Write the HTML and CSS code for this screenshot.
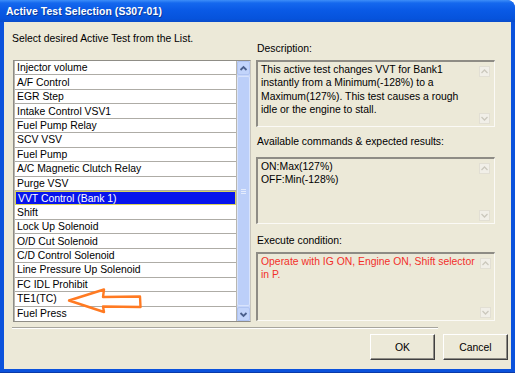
FILE: index.html
```html
<!DOCTYPE html>
<html lang="en">
<head>
    <meta charset="UTF-8">
    <title>Active Test Selection (S307-01)</title>
    <link rel="stylesheet" href="styles.css">
</head>
<body>
    <div class="window">
        <div class="titlebar">Active Test Selection (S307-01)</div>
        <div class="client">
            <div class="content">
                <div class="left">
                    <p class="prompt">Select desired Active Test from the List.</p>
                    <div class="listbox">
                        <ul class="items">
                            <li>Injector volume</li>
                            <li>A/F Control</li>
                            <li>EGR Step</li>
                            <li>Intake Control VSV1</li>
                            <li>Fuel Pump Relay</li>
                            <li>SCV VSV</li>
                            <li>Fuel Pump</li>
                            <li>A/C Magnetic Clutch Relay</li>
                            <li>Purge VSV</li>
                            <li class="selected">VVT Control (Bank 1)</li>
                            <li>Shift</li>
                            <li>Lock Up Solenoid</li>
                            <li>O/D Cut Solenoid</li>
                            <li>C/D Control Solenoid</li>
                            <li>Line Pressure Up Solenoid</li>
                            <li>FC IDL Prohibit</li>
                            <li>TE1(TC)</li>
                            <li>Fuel Press</li>
                        </ul>
                        <div class="scrollbar">
                            <div class="sb-btn"><svg width="11" height="11" viewBox="0 0 11 11"><polyline points="2.5,7 5.5,4 8.5,7" /></svg></div>
                            <div class="sb-thumb"><span></span><span></span><span></span></div>
                            <div class="sb-btn"><svg width="11" height="11" viewBox="0 0 11 11"><polyline points="2.5,4 5.5,7 8.5,4" /></svg></div>
                        </div>
                        <!-- pointer drawn over the list -->
                        <svg class="pointer" width="76" height="28" viewBox="0 0 76 28">
                            <polygon points="2,13.5 37,2.5 36,10 73,9.5 73.5,20 36,19.5 37,25" />
                        </svg>
                    </div>
                </div>
                <div class="right">
                    <div class="label">Description:</div>
                    <div class="field field-desc">
                        <div class="field-text">This active test changes VVT for Bank1<br>instantly from a Minimum(-128%) to a<br>Maximum(127%). This test causes a rough<br>idle or the engine to stall.</div>
                        <div class="field-scroll">
                            <div class="fs-btn"><svg width="9" height="9" viewBox="0 0 9 9"><polyline points="1.5,6 4.5,3 7.5,6" /></svg></div>
                            <div class="fs-btn"><svg width="9" height="9" viewBox="0 0 9 9"><polyline points="1.5,3 4.5,6 7.5,3" /></svg></div>
                        </div>
                    </div>
                    <div class="label label-gap">Available commands &amp; expected results:</div>
                    <div class="field field-cmd">
                        <div class="field-text">ON:Max(127%)<br>OFF:Min(-128%)</div>
                        <div class="field-scroll">
                            <div class="fs-btn"><svg width="9" height="9" viewBox="0 0 9 9"><polyline points="1.5,6 4.5,3 7.5,6" /></svg></div>
                            <div class="fs-btn"><svg width="9" height="9" viewBox="0 0 9 9"><polyline points="1.5,3 4.5,6 7.5,3" /></svg></div>
                        </div>
                    </div>
                    <div class="label label-gap2">Execute condition:</div>
                    <div class="field field-cond">
                        <div class="field-text warn">Operate with IG ON, Engine ON, Shift selector<br>in P.</div>
                        <div class="field-scroll">
                            <div class="fs-btn"><svg width="9" height="9" viewBox="0 0 9 9"><polyline points="1.5,6 4.5,3 7.5,6" /></svg></div>
                            <div class="fs-btn"><svg width="9" height="9" viewBox="0 0 9 9"><polyline points="1.5,3 4.5,6 7.5,3" /></svg></div>
                        </div>
                    </div>
                </div>
            </div>
            <div class="separator"></div>
            <div class="buttons">
                <button class="btn">OK</button>
                <button class="btn">Cancel</button>
            </div>
        </div>
    </div>
</body>
</html>
```

FILE: styles.css
```css
*{
    margin:0;
    padding:0;
    box-sizing:border-box;
}
body{
    background:#fff;
    font-family:"Liberation Sans", Arial, sans-serif;
    font-size:10.4px;
    color:#000;
}
.window{
    width:515px;
    height:373px;
    display:flex;
    flex-direction:column;
    background:#0b52dc;
    border-top-right-radius:8px;
    border-bottom:1px solid #0a3aa8;
}
.titlebar{
    height:22px;
    padding-left:6px;
    display:flex;
    align-items:center;
    color:#fff;
    font-weight:bold;
    font-size:10.4px;
    letter-spacing:0.1px;
    text-shadow:1px 1px 0 #0a3b9c;
    background:linear-gradient(to bottom, #3d8ef8 0, #1568ee 3px, #0a5ae6 45%, #0653dc 85%, #0a4cca 100%);
    border-top-right-radius:8px;
}
.client{
    flex:1;
    margin:0 4px 3px 4px;
    background:#ece9d8;
    display:flex;
    flex-direction:column;
    padding-left:8px;
}
.content{
    display:flex;
    gap:5px;
}
.left{
    width:239px;
}
.prompt{
    padding-top:10px;
    line-height:13px;
}
.listbox{
    position:relative;
    margin:15px 0 0 1px;
    height:262px;
    border:1px solid #8f8d86;
    border-right-color:#c8c5bb;
    display:flex;
    background:#fff;
}
.items{
    list-style:none;
    flex:1;
    display:grid;
    grid-template-rows:repeat(18, 1fr);
    border-left:1px solid #b9b7b0;
    border-right:1px solid #b9b7b0;
}
.items li{
    padding-left:2px;
    border-bottom:1px solid #aeaca6;
    display:flex;
    align-items:center;
    white-space:nowrap;
}
.items li:last-child{
    border-bottom:none;
}
.items li.selected{
    background:#0714ec;
    color:#fff;
    border:1px solid #d8d260;
}
.scrollbar{
    width:13px;
    display:flex;
    flex-direction:column;
    background:#c6d6fa;
}
.sb-btn{
    height:14px;
    display:flex;
    align-items:center;
    justify-content:center;
    background:#c2d4fb;
    border:1px solid #b0c4f2;
    border-radius:2px;
}
.sb-btn polyline{
    fill:none;
    stroke:#4a5f8c;
    stroke-width:1.8;
}
.sb-thumb{
    flex:1;
    margin:1px 0;
    background:#bccff9;
    border:1px solid #d8e3fc;
    border-radius:2px;
    display:flex;
    flex-direction:column;
    align-items:center;
    justify-content:center;
    gap:1px;
}
.sb-thumb span{
    width:5px;
    height:1px;
    background:#e4ecfd;
}
.pointer{
    position:absolute;
    left:53px;
    top:226px;
}
.pointer polygon{
    fill:none;
    stroke:#ff7a22;
    stroke-width:2.4;
    stroke-linejoin:round;
}
.right{
    width:239px;
    padding-top:20px;
}
.label{
    line-height:13px;
    padding-left:1px;
}
.label-gap{
    margin-top:8px;
}
.label-gap2{
    margin-top:10px;
}
.field{
    display:flex;
    margin-top:5px;
    border-top:2px solid #8e8c85;
    border-left:2px solid #8e8c85;
    border-right:1px solid #fbfaf6;
    border-bottom:1px solid #fbfaf6;
    background:#ece9d8;
}
.field-desc{
    height:67px;
}
.field-cmd{
    margin-top:9px;
    height:67px;
}
.field-cond{
    height:69px;
}
.field-text{
    flex:1;
    padding:1px 3px;
    line-height:13.4px;
    white-space:nowrap;
}
.warn{
    color:#f2302a;
}
.field-scroll{
    width:17px;
    padding:4px 3px 2px 2px;
    display:flex;
    flex-direction:column;
    justify-content:space-between;
}
.fs-btn{
    width:11px;
    height:11px;
    display:flex;
    align-items:center;
    justify-content:center;
    border:1px solid #e2dfd4;
    background:#f1efe8;
}
.fs-btn polyline{
    fill:none;
    stroke:#cbc8bd;
    stroke-width:1.3;
}
.separator{
    margin-top:5px;
    width:426px;
    height:2px;
    border-top:1px solid #a7a59d;
    border-bottom:1px solid #fff;
}
.buttons{
    margin-top:5px;
    display:flex;
    justify-content:flex-end;
    gap:8px;
    padding-right:3px;
}
.btn{
    width:65px;
    height:26px;
    font-family:"Liberation Sans", Arial, sans-serif;
    font-size:10.4px;
    color:#000;
    background:#ece9d8;
    border:1px solid;
    border-color:#fff #404040 #404040 #fff;
    box-shadow:inset -1px -1px 0 #8e8c85;
}
```
